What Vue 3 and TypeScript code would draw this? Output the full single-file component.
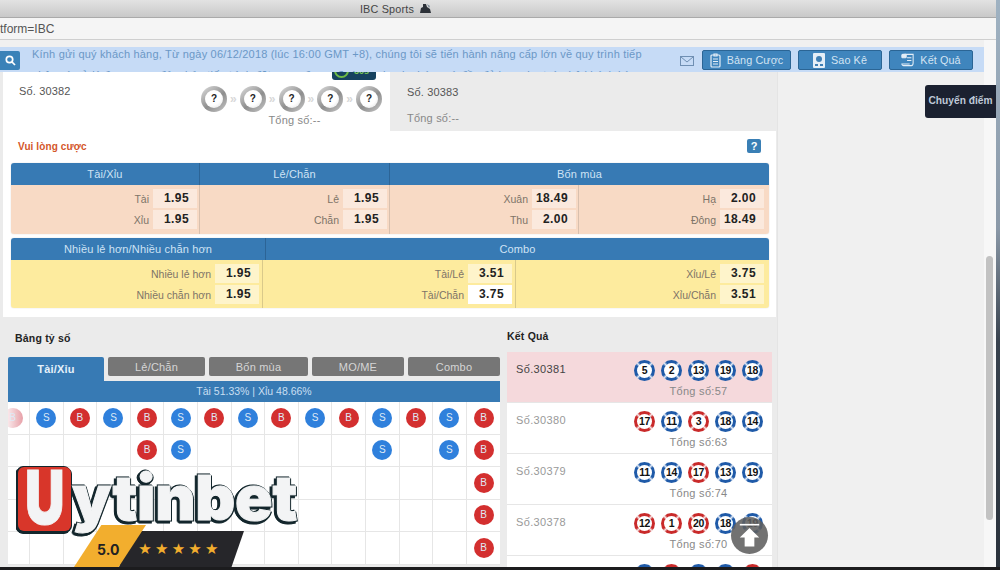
<script setup lang="ts">
interface Ball {
  n: number
  red?: boolean
}
interface Result {
  id: number
  total: number
  balls: Ball[]
}
interface Odd {
  label: string
  value: string
  on?: boolean
}

const blue = (n: number): Ball => ({ n })
const red = (n: number): Ball => ({ n, red: true })

const results: Result[] = [
  { id: 30381, total: 57, balls: [blue(5), blue(2), blue(13), blue(19), blue(18)] },
  { id: 30380, total: 63, balls: [red(17), blue(11), red(3), blue(18), blue(14)] },
  { id: 30379, total: 74, balls: [blue(11), blue(14), red(17), blue(13), blue(19)] },
  { id: 30378, total: 70, balls: [red(12), red(1), red(20), blue(18), blue(19)] },
  { id: 30377, total: 58, balls: [blue(9), red(4), blue(15), blue(16), red(14)] }
]

const topCols: Odd[][] = [
  [{ label: 'Tài', value: '1.95' }, { label: 'Xỉu', value: '1.95' }],
  [{ label: 'Lẻ', value: '1.95' }, { label: 'Chẵn', value: '1.95' }],
  [{ label: 'Xuân', value: '18.49' }, { label: 'Thu', value: '2.00' }],
  [{ label: 'Hạ', value: '2.00' }, { label: 'Đông', value: '18.49' }]
]
const bottomCols: Odd[][] = [
  [{ label: 'Nhiều lẻ hơn', value: '1.95' }, { label: 'Nhiều chẵn hơn', value: '1.95' }],
  [{ label: 'Tài/Lẻ', value: '3.51' }, { label: 'Tài/Chẵn', value: '3.75', on: true }],
  [{ label: 'Xỉu/Lẻ', value: '3.75' }, { label: 'Xỉu/Chẵn', value: '3.51' }]
]

const tabs = ['Lẻ/Chẵn', 'Bốn mùa', 'MO/ME', 'Combo']

// each row is 15 cells, '' = empty
const board: string[][] = [
  ['B', 'S', 'B', 'S', 'B', 'S', 'B', 'S', 'B', 'S', 'B', 'S', 'B', 'S', 'B'],
  ['', '', '', '', 'B', 'S', '', '', '', '', '', 'S', '', 'S', 'B'],
  ['', '', '', '', '', '', '', '', '', '', '', '', '', '', 'B'],
  ['', '', '', '', '', '', '', '', '', '', '', '', '', '', 'B'],
  ['', '', '', '', '', '', '', '', '', '', '', '', '', '', 'B']
]
</script>

<template>
  <div class="screen">
    <div class="window">
      <div class="titlebar">
        <span>IBC Sports</span>
        <svg width="13" height="12" viewBox="0 0 13 12">
          <path d="M4 1h3l1 3 3 2 1 4H1l1-5 2-1z" fill="#2c3138" />
          <path d="M8 1l3 2-1 2z" fill="#7d8a96" />
        </svg>
      </div>
      <div class="urlbar">tform=IBC</div>

      <div class="page">
        <div class="main">
          <div class="notice">
            <button class="search">
              <svg width="11" height="11" viewBox="0 0 11 11" fill="none" stroke="#fff" stroke-width="1.7">
                <circle cx="4.5" cy="4.5" r="3.2" />
                <path d="M7 7l3 3" />
              </svg>
            </button>
            <div class="notice-text">
              Kính gửi quý khách hàng, Từ ngày 06/12/2018 (lúc 16:00 GMT +8), chúng tôi sẽ tiến hành nâng cấp lớn về quy trình tiếp
              nhận và xử lý đơn cược, đảm bảo tiến trình đặt cược được rõ ràng, nhanh chóng và đầy đủ hơn cho toàn bộ khách hàng
            </div>
            <svg class="mail" width="14" height="10" viewBox="0 0 14 10" fill="none" stroke="#6f8fb3">
              <rect x="0.5" y="0.5" width="13" height="9" />
              <path d="M1 1l6 5 6-5" />
            </svg>
            <button class="action wide">
              <svg width="11" height="15" viewBox="0 0 11 15" fill="none" stroke="#e4eef7" stroke-width="1.2">
                <rect x="1" y="2" width="9" height="12" rx="1" />
                <path d="M4 1h3v2H4zM3 6h5M3 8.500h5M3 11h5" />
              </svg>
              Bảng Cược
            </button>
            <button class="action">
              <svg width="12" height="15" viewBox="0 0 12 15">
                <rect width="12" height="15" rx="1" fill="#e4eef7" />
                <circle cx="6" cy="6" r="3" fill="#3f7fb4" />
                <path d="M2 11h3v2H2zM7 11h3v2H7z" fill="#3f7fb4" />
              </svg>
              Sao Kê
            </button>
            <button class="action">
              <svg width="13" height="14" viewBox="0 0 15 15" fill="none" stroke="#e4eef7" stroke-width="1.2">
                <path d="M4 1h10v10c0 2-1 3-2 3H3c-1 0-2-1-2-2h9" />
                <rect x="1" y="1" width="5" height="4" rx="1" fill="#e4eef7" />
                <path d="M7 5h5M7 8h5" />
              </svg>
              Kết Quả
            </button>
          </div>

          <div class="body">
            <div class="content">
              <section class="draws">
                <div class="draw current">
                  <span class="draw-no">Số. 30382</span>
                  <div class="draw-balls">
                    <div class="unknowns">
                      <template v-for="i in 5" :key="i">
                        <span class="silver"><b>?</b></span>
                        <span v-if="i < 5" class="sep">»</span>
                      </template>
                    </div>
                    <span class="muted">Tổng số:--</span>
                  </div>
                  <div class="timer"><i></i>30s</div>
                </div>
                <div class="draw next">
                  <span class="draw-no">Số. 30383</span>
                  <span class="muted">Tổng số:--</span>
                </div>
              </section>

              <section class="betting">
                <div class="betting-head">
                  <span class="prompt">Vui lòng cược</span>
                  <span class="help">?</span>
                </div>

                <div class="odds four">
                  <div class="oh">Tài/Xỉu</div>
                  <div class="oh">Lẻ/Chẵn</div>
                  <div class="oh span2">Bốn mùa</div>
                  <div v-for="(col, i) in topCols" :key="i" class="oc peach">
                    <div v-for="o in col" :key="o.label" class="line">
                      <span>{{ o.label }}</span>
                      <b>{{ o.value }}</b>
                    </div>
                  </div>
                </div>

                <div class="odds three">
                  <div class="oh span2">Nhiều lẻ hơn/Nhiều chẵn hơn</div>
                  <div class="oh span2 end">Combo</div>
                  <div v-for="(col, i) in bottomCols" :key="i" class="oc yellow">
                    <div v-for="o in col" :key="o.label" class="line">
                      <span>{{ o.label }}</span>
                      <b :class="{ on: o.on }">{{ o.value }}</b>
                    </div>
                  </div>
                </div>
              </section>

              <section class="lower">
                <div class="scores">
                  <h4>Bảng tỷ số</h4>
                  <div class="tabs">
                    <div class="tab active">Tài/Xỉu</div>
                    <div v-for="t in tabs" :key="t" class="tab">{{ t }}</div>
                  </div>
                  <div class="ratio">Tài 51.33% | Xỉu 48.66%</div>
                  <div class="board">
                    <template v-for="(row, r) in board" :key="r">
                      <div v-for="(c, x) in row" :key="x" class="cell">
                        <span
                          v-if="c"
                          class="dot"
                          :class="[c === 'B' ? 'big' : 'small', { faded: x === 0 }]"
                        >{{ c }}</span>
                      </div>
                    </template>
                  </div>
                </div>

                <div class="results">
                  <h4>Kết Quả</h4>
                  <div v-for="(res, i) in results" :key="res.id" class="result" :class="{ latest: i === 0 }">
                    <span class="result-no">Số.{{ res.id }}</span>
                    <div class="result-right">
                      <div class="result-balls">
                        <span v-for="(b, j) in res.balls" :key="j" class="ball" :class="{ red: b.red }"><b>{{ b.n }}</b></span>
                      </div>
                      <span class="sum">Tổng số:{{ res.total }}</span>
                    </div>
                  </div>
                </div>
              </section>
            </div>
            <div class="aside"></div>
          </div>
        </div>

        <div class="track"><div class="thumb"></div></div>
      </div>
    </div>
    <div class="dock"></div>

    <div class="transfer">Chuyển điểm</div>

    <div class="to-top">
      <svg width="26" height="30" viewBox="0 0 26 30" fill="#fff">
        <path d="M1 0h24v2H1z" />
        <path d="M13 5l12 12h-6v11H7V17H1z" />
      </svg>
    </div>

    <div class="brand">
      <div class="rating">
        <span class="score">5.0</span>
        <span class="stars">★★★★★</span>
      </div>
      <div class="brand-name">
        <span class="brand-u"><span>U</span></span><span class="brand-rest">ytinbet</span>
      </div>
    </div>
  </div>
</template>

<style>
html,
body {
  margin: 0;
  overflow: hidden;
}
</style>

<style scoped>
* {
  box-sizing: border-box;
}
.screen {
  position: relative;
  width: 1000px;
  height: 570px;
  overflow: hidden;
  background: linear-gradient(#9fb2c2 0%, #8b99a8 40%, #38424e 60%, #2a323c 100%);
  font-family: 'Liberation Sans', Arial, sans-serif;
  color: #333;
}
.window {
  width: 996px;
  height: 567px;
  display: flex;
  flex-direction: column;
  background: #f0f0f0;
}
.dock {
  height: 3px;
  background: #1c1c1e;
}
.titlebar {
  height: 18px;
  flex: none;
  display: flex;
  align-items: center;
  justify-content: center;
  gap: 5px;
  padding-right: 204px;
  background: linear-gradient(#e2e2e2, #c9c9c9);
  border-bottom: 1px solid #aaa;
  font-size: 10.8px;
  letter-spacing: 0.2px;
  color: #444;
}
.urlbar {
  height: 22px;
  flex: none;
  line-height: 23px;
  background: #f5f5f5;
  border-bottom: 1px solid #cfcfcf;
  font-size: 12px;
  color: #555;
}
.page {
  flex: 1;
  display: flex;
  min-height: 0;
}
.main {
  width: 984px;
  padding-top: 7px;
  display: flex;
  flex-direction: column;
  min-height: 0;
}
.track {
  flex: 1;
  padding: 216px 3px 0 2px;
  background: #f7f7f7;
}
.thumb {
  width: 7px;
  height: 264px;
  border-radius: 4px;
  background: #c2c2c2;
}
.notice {
  height: 25px;
  flex: none;
  display: flex;
  align-items: flex-start;
  background: #c6dbf6;
  overflow: hidden;
}
button {
  font-family: inherit;
  padding: 0;
}
.search {
  width: 20px;
  height: 19px;
  margin-top: 4px;
  display: flex;
  align-items: center;
  justify-content: center;
  border: 0;
  border-radius: 0 2px 2px 0;
  background: #3a82b8;
}
.notice-text {
  width: 624px;
  margin: -3px 0 0 12px;
  flex: none;
  font-size: 11px;
  line-height: 21px;
  letter-spacing: 0.19px;
  color: #6b98c6;
}
.mail {
  margin: 9px 0 0 24px;
  flex: none;
}
.action {
  width: 84px;
  height: 20px;
  margin: 3px 0 0 7px;
  flex: none;
  display: flex;
  align-items: center;
  justify-content: center;
  gap: 6px;
  border: 1px solid #2b6595;
  border-radius: 2px;
  background: #3f85bd;
  color: #d3e4f3;
  font-size: 10.8px;
  letter-spacing: 0.1px;
}
.action.wide {
  width: 89px;
  margin-left: 8px;
}
.body {
  flex: 1;
  min-height: 0;
  display: flex;
}
.content {
  width: 778px;
  flex: none;
  padding: 0 1px 0 3px;
  background: #ebebeb;
  border-right: 1px solid #e4e4e4;
  overflow: hidden;
}
.aside {
  flex: 1;
  background: #f0f0f0;
}
.draws {
  height: 59px;
  display: flex;
}
.draw {
  position: relative;
}
.draw-no {
  font-size: 11px;
  letter-spacing: 0.15px;
  color: #555;
}
.muted {
  font-size: 11px;
  letter-spacing: 0.2px;
  color: #888;
}
.current {
  width: 387px;
  padding: 13px 0 0 16px;
  display: flex;
  justify-content: space-between;
  background: #fff;
}
.draw-balls {
  width: 181px;
  margin: 1px 8px 0 0;
  display: flex;
  flex-direction: column;
  align-items: center;
}
.unknowns {
  height: 26px;
  display: flex;
  align-items: center;
  justify-content: space-between;
  width: 100%;
}
.silver {
  width: 26px;
  height: 26px;
  flex: none;
  display: flex;
  align-items: center;
  justify-content: center;
  border-radius: 50%;
  background: linear-gradient(140deg, #dedede, #8e8e8e 55%, #c8c8c8);
}
.silver b {
  width: 18px;
  height: 18px;
  border-radius: 50%;
  background: radial-gradient(circle at 40% 35%, #fff 55%, #dcdcdc);
  text-align: center;
  line-height: 18px;
  font-size: 10px;
  color: #222;
}
.sep {
  font-size: 12px;
  font-weight: 700;
  color: #d8d8d8;
}
.draw-balls .muted {
  margin: 2px 0 0 6px;
}
.timer {
  position: absolute;
  left: 329px;
  top: -8px;
  width: 44px;
  height: 16px;
  border-radius: 0 0 3px 3px;
  padding: 2px 0 0 22px;
  background: #16425f;
  color: #7fc95a;
  font-size: 9px;
  font-weight: 700;
}
.timer i {
  position: absolute;
  left: 2px;
  top: -1px;
  width: 15px;
  height: 15px;
  border-radius: 50%;
  border: 2px solid #6dbb45;
}
.next {
  flex: 1;
  padding: 14px 0 0 17px;
  display: flex;
  flex-direction: column;
  gap: 14px;
}
.betting {
  height: 186px;
  padding: 8px 8px 0;
  background: #fff;
}
.betting-head {
  height: 24px;
  display: flex;
  align-items: flex-start;
  justify-content: space-between;
  padding: 0 7px 0 7px;
}
.prompt {
  font-size: 10px;
  font-weight: 700;
  line-height: 15px;
  letter-spacing: 0.1px;
  color: #d4562a;
}
.help {
  width: 14px;
  height: 14px;
  border-radius: 2px;
  text-align: center;
  line-height: 14px;
  background: #3a7fb5;
  color: #fff;
  font-size: 11px;
  font-weight: 700;
}
.odds {
  width: 758px;
  display: grid;
  grid-template-rows: 22px 49px;
  border-radius: 3px;
  overflow: hidden;
  box-shadow: 0 0 1px #bbb;
}
.four {
  grid-template-columns: 189px 190px 189px 190px;
  margin-bottom: 4px;
}
/* the header split sits 3px right of the body split */
.three {
  grid-template-columns: 252px 3px 250px 253px;
  grid-template-rows: 22px 48px;
}
.three .oc:nth-of-type(4) {
  grid-column: span 2;
}
.oh {
  display: flex;
  align-items: center;
  justify-content: center;
  background: #377ab4;
  border-right: 1px solid #2c6496;
  color: #cfe3f5;
  font-size: 11px;
  letter-spacing: 0.15px;
}
.span2 {
  grid-column: span 2;
}
.four .span2,
.end {
  border-right: 0;
}
.oc {
  padding: 4px 2px 0 0;
  display: flex;
  flex-direction: column;
  gap: 2px;
  border-right: 1px solid #d8c0ae;
}
.oc:last-child {
  padding-right: 5px;
  border-right: 0;
}
.peach {
  background: #f8dac5;
}
.yellow {
  background: #fdeb9e;
  padding-right: 3px;
  border-right-color: #d9c98a;
}
.line {
  height: 19px;
  display: flex;
  align-items: center;
  justify-content: flex-end;
  gap: 4px;
  font-size: 10.5px;
  color: #7d7468;
}
.line b {
  width: 44px;
  height: 19px;
  line-height: 19px;
  text-align: right;
  padding-right: 8px;
  font-size: 12px;
  letter-spacing: 0.4px;
  color: #222;
}
.peach .line b {
  background: #fbe9dd;
}
.yellow .line b {
  background: #fef4cb;
}
.yellow .line b.on {
  background: #fff;
}
.lower {
  display: flex;
  gap: 7px;
  padding: 0 5px;
}
h4 {
  margin: 0;
  height: 40px;
  padding-top: 15px;
  font-size: 10.5px;
  letter-spacing: 0.2px;
  color: #222;
}
.scores {
  width: 492px;
  flex: none;
}
.scores h4 {
  padding-left: 7px;
}
.tabs {
  display: flex;
  gap: 4px;
  height: 24px;
}
.tab {
  height: 19px;
  flex: none;
  display: flex;
  align-items: center;
  justify-content: center;
  border-radius: 2px;
  background: #767676;
  color: #d5d5d5;
  font-size: 11px;
  letter-spacing: 0.2px;
}
.tab:nth-child(2) {
  width: 97px;
}
.tab:nth-child(3) {
  width: 99px;
}
.tab:nth-child(4) {
  width: 92px;
}
.tab:nth-child(5) {
  width: 92px;
}
.tab.active {
  width: 96px;
  height: 24px;
  border-radius: 2px 2px 0 0;
  background: #377ab4;
  color: #e4f0fa;
  font-weight: 700;
}
.ratio {
  height: 21px;
  line-height: 21px;
  text-align: center;
  background: #377ab4;
  color: #c8dff2;
  font-size: 10.5px;
}
.board {
  display: grid;
  grid-template-columns: 22px repeat(14, 33.6px);
  grid-auto-rows: 32.5px;
  background: #fff;
}
.cell {
  display: flex;
  align-items: center;
  justify-content: center;
  border-right: 1px solid #e6e6e6;
  border-bottom: 1px solid #e6e6e6;
  overflow: hidden;
}
.cell:nth-child(15n) {
  border-right: 0;
}
.dot {
  width: 20px;
  height: 20px;
  flex: none;
  border-radius: 50%;
  text-align: center;
  line-height: 20px;
  color: #dfe9f5;
  font-size: 10px;
}
.big {
  background: #d32f2f;
}
.small {
  background: #2f80dc;
}
.faded {
  margin-left: -12px;
  background: linear-gradient(90deg, #fff, #e7a0a8);
}
.results {
  width: 265px;
  flex: none;
}
.results h4 {
  height: 35px;
  padding-top: 13px;
}
.result {
  height: 51px;
  display: flex;
  justify-content: space-between;
  padding: 8px 9px 0 9px;
  background: #fff;
  border-bottom: 1px solid #e6e6e6;
}
.result.latest {
  background: #f5d9dc;
}
.result-no {
  margin-top: 3px;
  font-size: 11px;
  letter-spacing: 0.35px;
  color: #999;
}
.latest .result-no {
  color: #444;
}
.result-right {
  display: flex;
  flex-direction: column;
  align-items: center;
}
.result-balls {
  display: flex;
  gap: 6px;
}
.ball {
  width: 21px;
  height: 21px;
  display: flex;
  align-items: center;
  justify-content: center;
  border-radius: 50%;
  background: repeating-conic-gradient(from -45deg, #d7e3f3 0deg, #1f5aa8 14deg 76deg, #d7e3f3 90deg);
}
.ball.red {
  background: repeating-conic-gradient(from -45deg, #f5dfdf 0deg, #c92a2a 14deg 76deg, #f5dfdf 90deg);
}
.ball b {
  width: 15px;
  height: 15px;
  border-radius: 50%;
  background: #fff;
  text-align: center;
  line-height: 15px;
  font-size: 10.5px;
  letter-spacing: -0.3px;
  color: #111;
}
.sum {
  margin-top: 4px;
  font-size: 11px;
  letter-spacing: 0.3px;
  color: #888;
}
.transfer {
  position: absolute;
  left: 925px;
  top: 85px;
  width: 71px;
  height: 33px;
  line-height: 32px;
  text-align: center;
  border-radius: 3px 0 0 3px;
  background: #1b2130;
  color: #bfc9d8;
  font-size: 10.2px;
  font-weight: 700;
}
.to-top {
  position: absolute;
  left: 731px;
  top: 517px;
  width: 37px;
  height: 37px;
  display: flex;
  align-items: center;
  justify-content: center;
  border-radius: 50%;
  background: rgba(95, 95, 95, 0.88);
}
.to-top svg {
  width: 21px;
  height: 26px;
}
.brand {
  position: absolute;
  left: 16px;
  top: 465px;
  width: 290px;
  height: 102px;
  overflow: hidden;
}
.brand-name {
  position: relative;
  display: flex;
  align-items: flex-start;
  height: 78px;
  font-family: 'Inter', 'DejaVu Sans', sans-serif;
  font-weight: 900;
  color: #f3f4f5;
  filter: drop-shadow(1px 1px 0 #13262c) drop-shadow(-1px -1px 0 #13262c) drop-shadow(-2px 2px 0 #13262c);
}
.brand-u {
  width: 53px;
  height: 64px;
  margin: 2px 0 0 2px;
  flex: none;
  display: flex;
  justify-content: center;
  overflow: hidden;
  border-radius: 6px;
  background: #d8362a;
}
.brand-u span {
  display: block;
  font-size: 74px;
  line-height: 60px;
  transform: scaleX(0.74);
  -webkit-text-stroke: 1px #f3f4f5;
}
.brand-rest {
  margin-left: 1px;
  font-size: 62px;
  line-height: 66px;
  letter-spacing: -0.2px;
  -webkit-text-stroke: 1px #f3f4f5;
}
.rating {
  position: absolute;
  left: 58px;
  top: 60px;
  width: 190px;
  height: 42px;
  display: flex;
  align-items: center;
}
.rating::before {
  content: '';
  position: absolute;
  left: 45px;
  top: 6px;
  width: 125px;
  height: 36px;
  background: #26262a;
  clip-path: polygon(10% 0, 100% 0, 90% 100%, 0 100%);
}
.rating::after {
  content: '';
  position: absolute;
  left: 0;
  top: 0;
  width: 72px;
  height: 42px;
  background: #f2ae2e;
  clip-path: polygon(38% 0, 100% 0, 62% 100%, 0 100%);
}
.score {
  position: relative;
  z-index: 1;
  margin: 6px 0 0 23px;
  font-size: 14px;
  font-weight: 700;
  font-family: 'Inter', sans-serif;
  color: #222;
}
.stars {
  position: relative;
  z-index: 1;
  margin: 6px 0 0 19px;
  font-family: 'DejaVu Sans', sans-serif;
  font-size: 15px;
  letter-spacing: 3.200px;
  color: #f2ae2e;
}
</style>
